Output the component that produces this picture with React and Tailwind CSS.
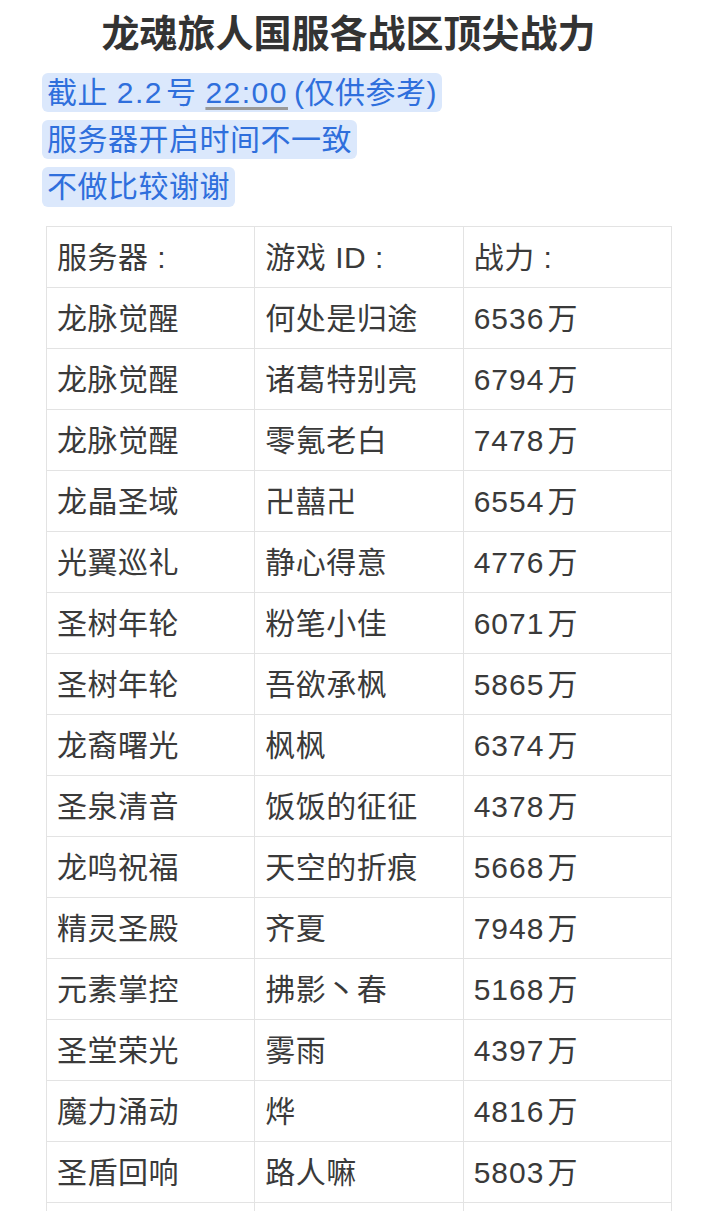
const ROWS = [
  ['龙脉觉醒', '何处是归途', '6536'],
  ['龙脉觉醒', '诸葛特别亮', '6794'],
  ['龙脉觉醒', '零氪老白', '7478'],
  ['龙晶圣域', '卍囍卍', '6554'],
  ['光翼巡礼', '静心得意', '4776'],
  ['圣树年轮', '粉笔小佳', '6071'],
  ['圣树年轮', '吾欲承枫', '5865'],
  ['龙裔曙光', '枫枫', '6374'],
  ['圣泉清音', '饭饭的征征', '4378'],
  ['龙鸣祝福', '天空的折痕', '5668'],
  ['精灵圣殿', '齐夏', '7948'],
  ['元素掌控', '拂影丶春', '5168'],
  ['圣堂荣光', '雾雨', '4397'],
  ['魔力涌动', '烨', '4816'],
  ['圣盾回响', '路人嘛', '5803'],
];

const latin = { fontFamily: '"Liberation Sans", "Noto Sans CJK SC", sans-serif' };

function Cell({ children }) {
  return (
    <td className="border border-[#e3e3e3] h-[61px] px-[10px] align-middle">
      {children}
    </td>
  );
}

export default function App() {
  return (
    <div
      className="w-[720px] h-[1211px] overflow-hidden bg-white"
      style={{ fontFamily: '"Noto Sans CJK SC", "Noto Sans", sans-serif' }}
    >
      <h1 className="pt-[6px] pr-[23px] text-center text-[38px] leading-[50px] font-bold text-[#333]">
        龙魂旅人国服各战区顶尖战力
      </h1>

      <div
        className="mt-[17px] pl-[42px] flex flex-col items-start gap-[8px] text-[30px] tracking-[0.5px] text-[#2f6fdc]"
        style={latin}
      >
        <span className="h-[39px] leading-[39px] px-[5px] rounded-md bg-[#dbe8fc]">
          截止 <span className="tracking-[1.5px]">2.2</span>
          <span className="ml-[3px]">号</span>{' '}
          <span className="tracking-[1.5px] underline decoration-[#999] decoration-[3px] underline-offset-[4px]">22:00</span>
          <span className="ml-[6px]">(仅供参考)</span>
        </span>
        <span className="h-[39px] leading-[39px] px-[5px] rounded-md bg-[#dbe8fc]">
          服务器开启时间不一致
        </span>
        <span className="h-[40px] leading-[40px] px-[5px] rounded-md bg-[#dbe8fc]">
          不做比较谢谢
        </span>
      </div>

      <table
        className="mt-[19px] ml-[46px] w-[626px] table-fixed border-collapse text-[30px] tracking-[0.5px] text-[#3a3a3a]"
        style={latin}
      >
        <tbody>
          <tr>
            <Cell>服务器 :</Cell>
            <Cell>游戏 ID :</Cell>
            <Cell>战力 :</Cell>
          </tr>
          {ROWS.map((r, i) => (
            <tr key={i}>
              <Cell>{r[0]}</Cell>
              <Cell>{r[1]}</Cell>
              <Cell>
                <span className="tracking-[1px]">{r[2]}</span>
                <span className="ml-[3px]">万</span>
              </Cell>
            </tr>
          ))}
          <tr>
            <Cell />
            <Cell />
            <Cell />
          </tr>
        </tbody>
      </table>
    </div>
  );
}
